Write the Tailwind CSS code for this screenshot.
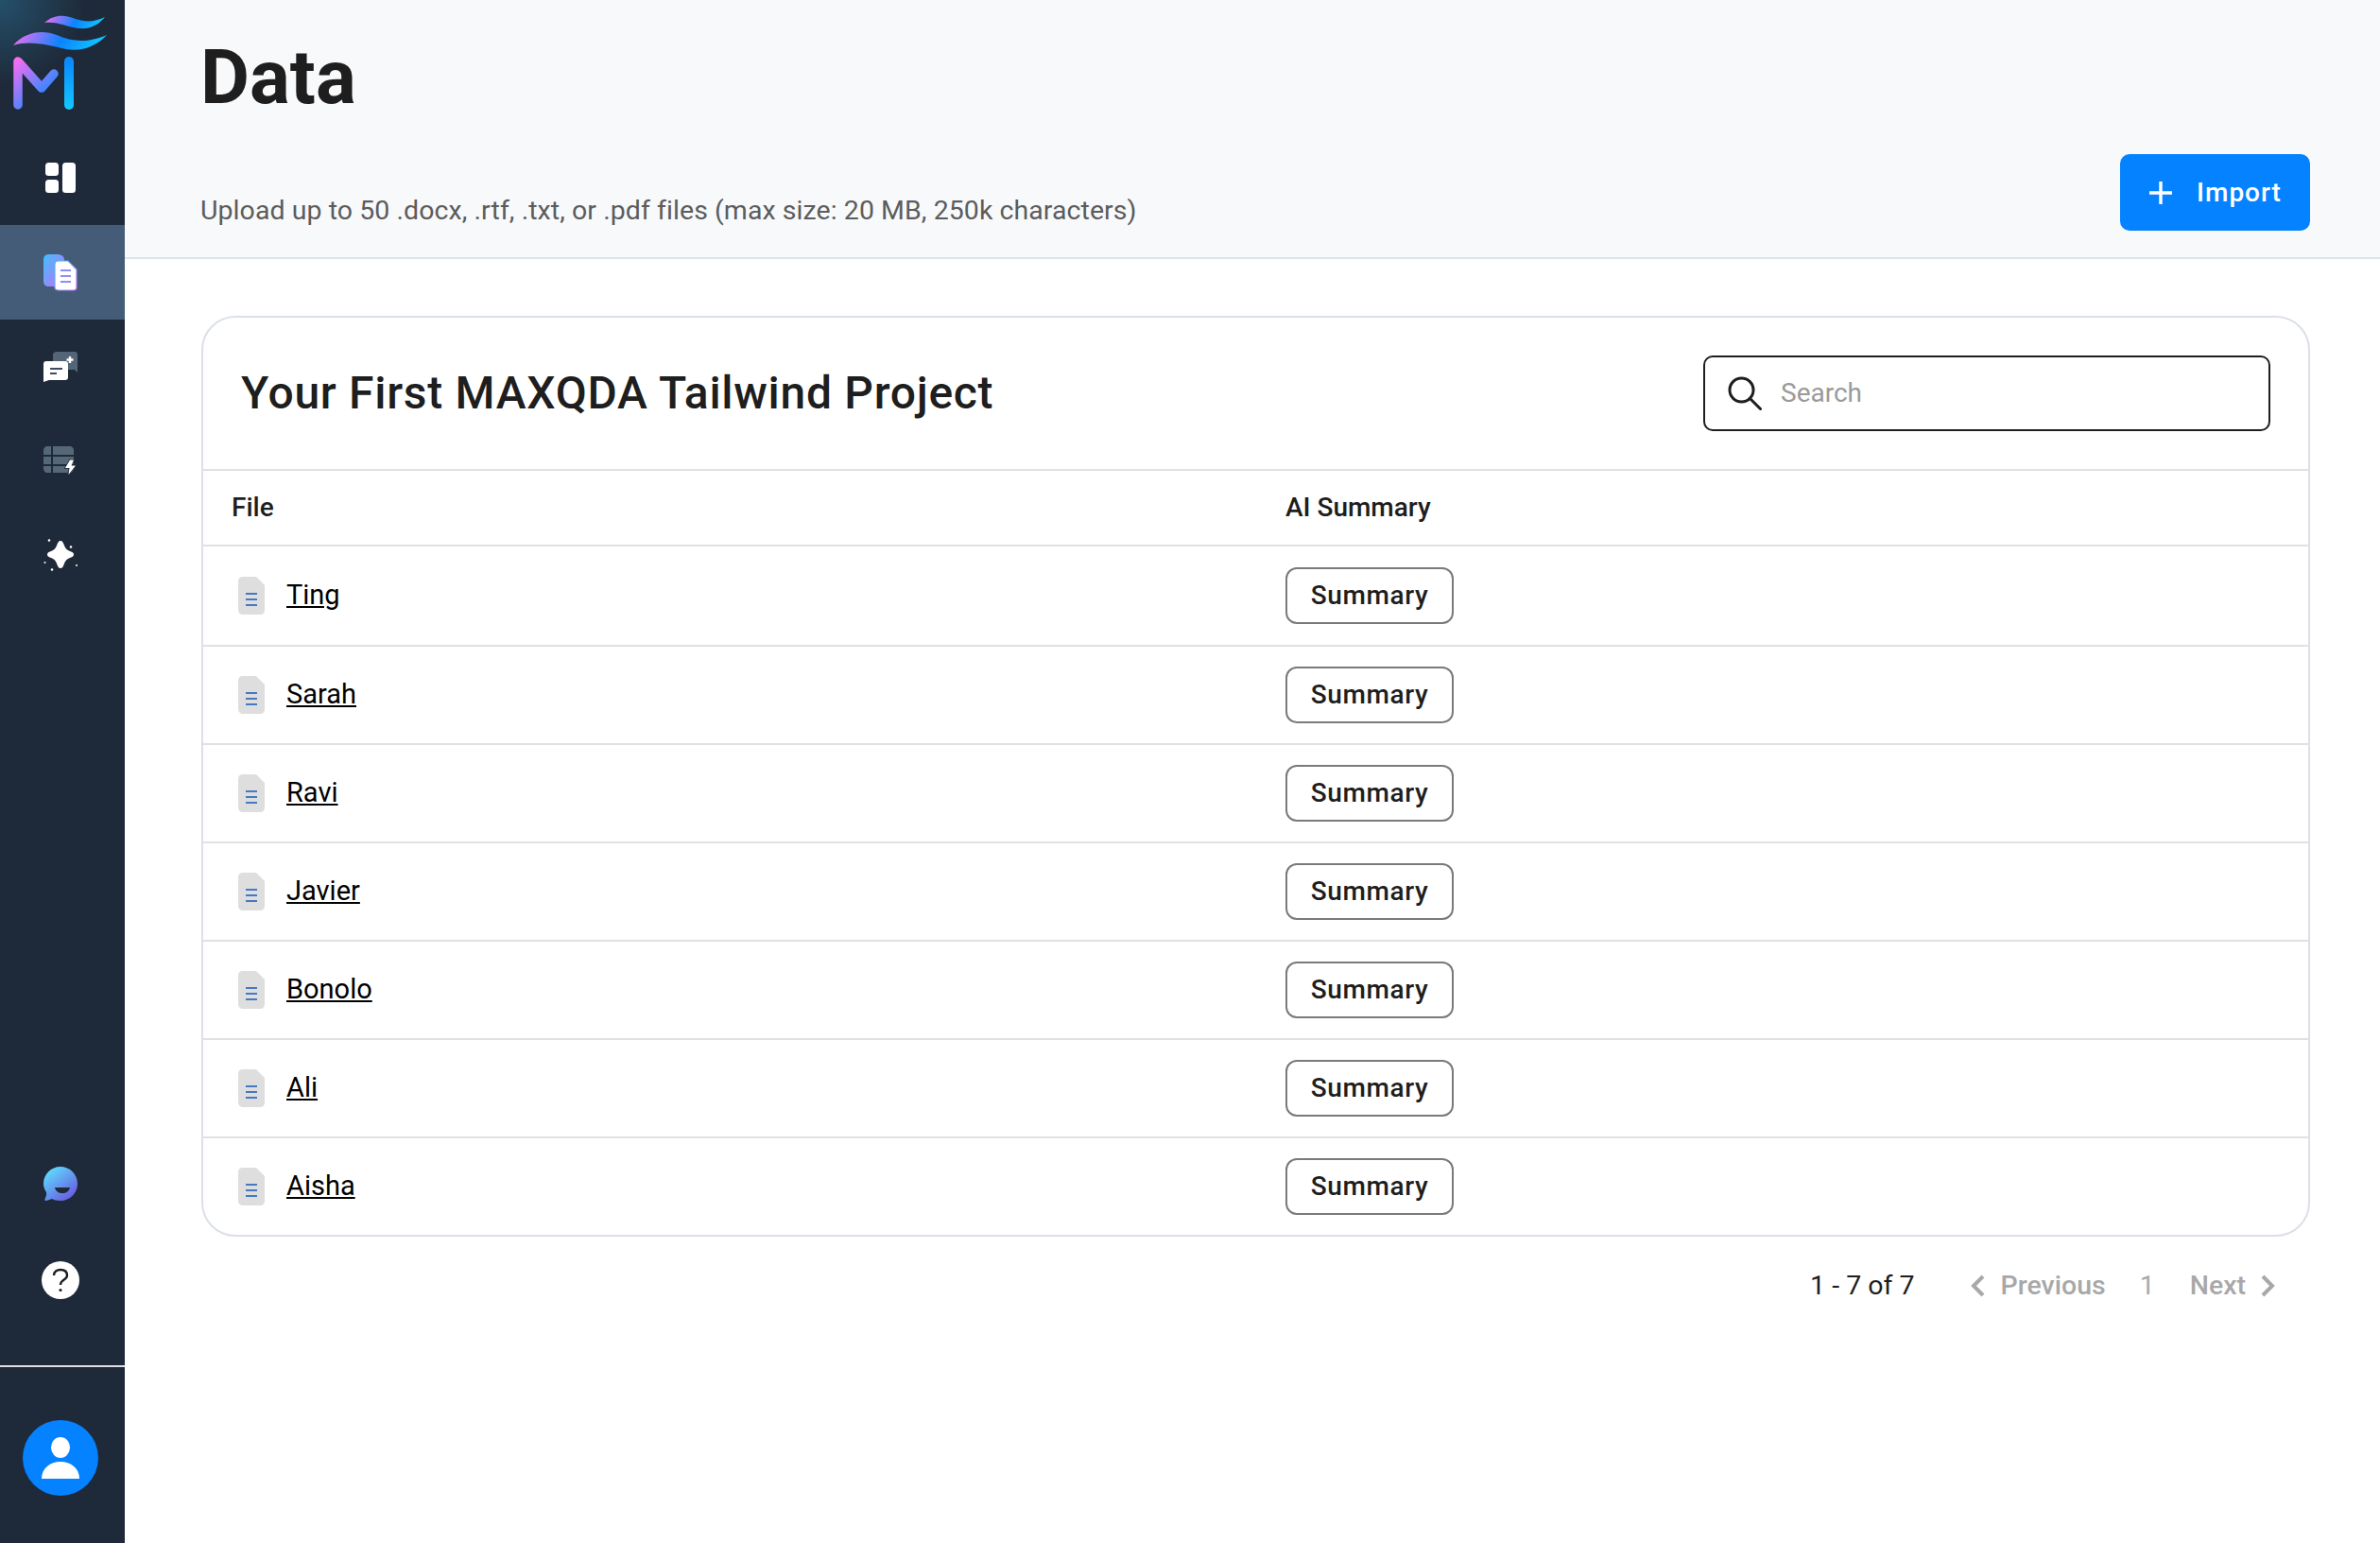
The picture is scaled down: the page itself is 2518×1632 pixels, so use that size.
<!DOCTYPE html>
<html lang="en">
<head>
  <meta charset="UTF-8">
  <title>Data</title>
  <script src="https://cdn.jsdelivr.net/npm/@tailwindcss/browser@4"></script>
</head>
<body class="bg-white font-['Roboto',sans-serif] text-[#1e1e1e]">
  <svg width="0" height="0" class="absolute">
    <defs>
      <linearGradient id="logoA" x1="0" y1="0" x2="1" y2="0.1"><stop offset="0" stop-color="#ff6cf0"/><stop offset="0.55" stop-color="#0a84ff"/><stop offset="1" stop-color="#12c8ff"/></linearGradient>
      <linearGradient id="logoB" gradientUnits="userSpaceOnUse" x1="14" y1="65" x2="60" y2="110"><stop offset="0" stop-color="#ff6cf0"/><stop offset="0.7" stop-color="#3f86ff"/><stop offset="1" stop-color="#0a84ff"/></linearGradient>
      <linearGradient id="logoC" x1="0" y1="0" x2="0" y2="1"><stop offset="0" stop-color="#0a84ff"/><stop offset="1" stop-color="#12c8ff"/></linearGradient>
      <linearGradient id="docs" x1="0" y1="0" x2="1" y2="1"><stop offset="0" stop-color="#3fc0ff"/><stop offset="1" stop-color="#c56cf5"/></linearGradient>
      <linearGradient id="bubble" x1="0.1" y1="0" x2="0.9" y2="1"><stop offset="0" stop-color="#5ce6ff"/><stop offset="1" stop-color="#6a4fe0"/></linearGradient>
    </defs>
  </svg>

  <div class="flex h-[1632px] w-[2518px] overflow-hidden">
    <!-- sidebar -->
    <aside class="flex w-[132px] shrink-0 flex-col bg-[#1e2a3a] bg-[radial-gradient(circle_at_0_0,#25506a_0,#1e2a3a_90px)]">
      <svg class="mt-[15px] ml-[14px] h-[102px] w-[100px]" viewBox="14 15 100 102" fill="none">
        <path d="M47 24C58 14 70 16 80 20C92 24 100 23 111 18C104 27 94 31 84 30C72 29 60 22 47 24Z" fill="url(#logoA)"/>
        <path d="M14 48C26 34 44 31 60 37C76 44 92 46 113 37C102 49 86 55 70 52C52 48 32 42 14 48Z" fill="url(#logoA)"/>
        <path d="M19 111V65L44 93L57 78" stroke="url(#logoB)" stroke-width="9.5" stroke-linecap="round" stroke-linejoin="round"/>
        <rect x="68" y="60" width="10" height="56" rx="5" fill="url(#logoC)"/>
      </svg>

      <nav class="mt-[21px] flex flex-col">
        <a class="flex h-[100px] items-center justify-center pr-[4px]">
          <svg class="h-[32px] w-[32px]" viewBox="0 0 32 32" fill="#fff">
            <rect x="0" y="0" width="14" height="14" rx="3.5"/><rect x="0" y="18" width="14" height="14" rx="3.5"/><rect x="18" y="0" width="14" height="32" rx="3.5"/>
          </svg>
        </a>
        <a class="flex h-[100px] items-center justify-center bg-[#445c78] pr-[4px]">
          <svg class="h-[40px] w-[38px]" viewBox="0 0 38 40" fill="none">
            <path d="M7 1H15C20 1 23 3 23 7V35H7C3 35 1 33 1 29V7C1 3 3 1 7 1Z" fill="url(#docs)"/>
            <path d="M17 8H27L36 17V36C36 38 35 39 33 39H17C14 39 13 38 13 36V12C13 9 14 8 17 8Z" fill="#fff" stroke="url(#docs)" stroke-width="1.2"/>
            <path d="M19 18H30M19 24H30M19 30H30" stroke="#8f8cf8" stroke-width="2.2"/>
          </svg>
        </a>
        <a class="flex h-[100px] items-center justify-center pr-[4px]">
          <svg class="h-[33px] w-[36px]" viewBox="0 0 36 33" fill="none">
            <path d="M14 0H33C35 0 36 1 36 3V22L33 19H14C12 19 10 18 10 16V3C10 1 12 0 14 0Z" fill="#536577"/>
            <path d="M28 5V12M24.500 8.500H31.500" stroke="#fff" stroke-width="2.400"/>
            <path d="M3 10H23C25 10 26 11 26 13V27C26 29 25 30 23 30H6L0 32V13C0 11 1 10 3 10Z" fill="#fff"/>
            <path d="M7 18H20M7 23H14" stroke="#3f4e5f" stroke-width="2"/>
          </svg>
        </a>
        <a class="flex h-[100px] items-center justify-center pr-[4px]">
          <svg class="h-[32px] w-[36px]" viewBox="0 0 36 32" fill="none">
            <path d="M4 0H8V9H0V4C0 2 2 0 4 0ZM10 0H28C30 0 32 2 32 4V9H10ZM0 11H8V19H0ZM10 11H32V19H10ZM0 21H8V28H4C2 28 0 26 0 24ZM10 21H32V24C32 26 30 28 28 28H10Z" fill="#566878"/>
            <path d="M28 14.500L23 23H27.500L26.500 30L34 20.500H29.500L32 14.500Z" fill="#fff" stroke="#1e2a3a" stroke-width="1.500" paint-order="stroke"/>
          </svg>
        </a>
        <a class="flex h-[100px] items-center justify-center pr-[4px]">
          <svg class="h-[36px] w-[36px]" viewBox="0 0 36 36" fill="#fff">
            <path d="M18 2C20 2 21 4 22 7C23 10 25 12 28 13C31 14 32 15 32 16.500C32 18 31 19 28 20C25 21 23 23 22 26C21 29 20 31 18 31C16 31 15 29 14 26C13 23 11 21 8 20C5 19 4 18 4 16.500C4 15 5 14 8 13C11 12 13 10 14 7C15 4 16 2 18 2Z"/>
            <circle cx="6" cy="1.500" r="1.300"/><circle cx="29" cy="8.500" r="1.300"/><circle cx="1.500" cy="25" r="1"/><circle cx="35" cy="28" r="1"/><circle cx="9" cy="32.500" r="1.300"/>
          </svg>
        </a>
      </nav>

      <div class="mt-auto flex flex-col items-center">
        <svg class="mr-[4px] mb-[64px] h-[36px] w-[36px]" viewBox="0 0 36 36">
          <path d="M18 0C28 0 36 8 36 18C36 28 28 36 18 36C14 36 11 35 9 34L3 36C1 36 1 35 2 33C3 31 3.500 29 3 27C1 24 0 21 0 18C0 8 8 0 18 0Z" fill="url(#bubble)"/>
          <path d="M12 22H28C27 26 24 28 20 28C16 28 13 26 12 22Z" fill="#1e2a3a"/>
        </svg>
        <div class="mr-[4px] flex h-[40px] w-[40px] items-center justify-center rounded-full bg-white">
          <svg class="h-[26px] w-[18px]" viewBox="0 0 18 26" fill="none">
            <path d="M2 8C2 4 5 2 9 2C13 2 16 4 16 8C16 13 9 12 9 18" stroke="#1e1e1e" stroke-width="2.400"/>
            <circle cx="9" cy="23.500" r="1.600" fill="#1e1e1e"/>
          </svg>
        </div>
        <div class="mt-[70px] h-[2px] w-full bg-[#dde1e6]"></div>
        <div class="mt-[56px] mr-[4px] mb-[50px] flex h-[80px] w-[80px] items-center justify-center rounded-full bg-[#0582ff]">
          <svg class="h-[44px] w-[40px]" viewBox="0 0 40 44" fill="#fff">
            <ellipse cx="20" cy="11" rx="10" ry="11"/>
            <path d="M0 44C0 33 9 26 20 26C31 26 40 33 40 44Z"/>
          </svg>
        </div>
      </div>
    </aside>

    <!-- main -->
    <main class="flex min-w-0 flex-1 flex-col">
      <header class="flex h-[274px] shrink-0 items-end justify-between border-b-2 border-[#dfe3ea] bg-[#f8f9fb] pr-[74px] pl-[80px]">
        <div class="flex h-full flex-col">
          <h1 class="mt-[37px] text-[80px] leading-[90px] font-bold">Data</h1>
          <p class="mt-auto mb-[29px] text-[28.500px] leading-[40px] tracking-[0.06px] text-[#5c5c5c]">Upload up to 50 .docx, .rtf, .txt, or .pdf files (max size: 20 MB, 250k characters)</p>
        </div>
        <button class="mb-[28px] flex h-[81px] w-[201px] items-center justify-center gap-[25px] rounded-[10px] bg-[#0582ff] text-[28px] font-medium tracking-[1px] text-white">
          <svg class="h-[26px] w-[26px]" viewBox="0 0 26 26" stroke="#fff" stroke-width="3.400"><path d="M13 1V25M1 13H25"/></svg>
          Import
        </button>
      </header>

      <section class="mx-[81px] mt-[60px] w-[2231px] rounded-[36px] border-2 border-[#dbe0e8]">
        <div class="flex h-[162px] items-center justify-between border-b-2 border-[#e1e1e1] pr-[40px] pl-[40px]">
          <h2 class="text-[48px] font-medium tracking-[0.7px] text-[#1e1e1e]">Your First MAXQDA Tailwind Project</h2>
          <label class="flex h-[80px] w-[600px] items-center gap-[20px] rounded-[10px] border-2 border-[#1e1e1e] px-[24px]">
            <svg class="h-[36px] w-[36px] shrink-0" viewBox="0 0 36 36" fill="none" stroke="#1e1e1e" stroke-width="3"><circle cx="14.500" cy="14.500" r="12.500"/><path d="M23.500 23.500L34.500 34.500" stroke-linecap="round"/></svg>
            <span class="text-[28px] text-[#9a9a9a]">Search</span>
          </label>
        </div>

        <div class="grid h-[80px] grid-cols-[1115px_1fr] items-center border-b-2 border-[#e1e1e1] pl-[30px] text-[28px] font-medium">
          <div>File</div>
          <div>AI Summary</div>
        </div>

        <div class="grid h-[106px] grid-cols-[1115px_1fr] items-center border-b-2 border-[#e1e1e1] pl-[37px]">
          <div class="flex items-center gap-[23px]"><svg class="h-[40px] w-[28px]" viewBox="0 0 28 40"><path d="M5 0H19L28 9V35C28 38 26 40 23 40H5C2 40 0 38 0 35V5C0 2 2 0 5 0Z" fill="#dedede"/><path d="M8 18H20M8 24H20M8 30H20" stroke="#4778c2" stroke-width="2"/></svg><a class="text-[29px] text-black underline">Ting</a></div>
          <div class="-ml-[7px]"><button class="h-[60px] w-[178px] rounded-[12px] border-2 border-[#7a7a7a] text-[28px] font-medium tracking-[0.6px]">Summary</button></div>
        </div>
        <div class="grid h-[104px] grid-cols-[1115px_1fr] items-center border-b-2 border-[#e1e1e1] pl-[37px]">
          <div class="flex items-center gap-[23px]"><svg class="h-[40px] w-[28px]" viewBox="0 0 28 40"><path d="M5 0H19L28 9V35C28 38 26 40 23 40H5C2 40 0 38 0 35V5C0 2 2 0 5 0Z" fill="#dedede"/><path d="M8 18H20M8 24H20M8 30H20" stroke="#4778c2" stroke-width="2"/></svg><a class="text-[29px] text-black underline">Sarah</a></div>
          <div class="-ml-[7px]"><button class="h-[60px] w-[178px] rounded-[12px] border-2 border-[#7a7a7a] text-[28px] font-medium tracking-[0.6px]">Summary</button></div>
        </div>
        <div class="grid h-[104px] grid-cols-[1115px_1fr] items-center border-b-2 border-[#e1e1e1] pl-[37px]">
          <div class="flex items-center gap-[23px]"><svg class="h-[40px] w-[28px]" viewBox="0 0 28 40"><path d="M5 0H19L28 9V35C28 38 26 40 23 40H5C2 40 0 38 0 35V5C0 2 2 0 5 0Z" fill="#dedede"/><path d="M8 18H20M8 24H20M8 30H20" stroke="#4778c2" stroke-width="2"/></svg><a class="text-[29px] text-black underline">Ravi</a></div>
          <div class="-ml-[7px]"><button class="h-[60px] w-[178px] rounded-[12px] border-2 border-[#7a7a7a] text-[28px] font-medium tracking-[0.6px]">Summary</button></div>
        </div>
        <div class="grid h-[104px] grid-cols-[1115px_1fr] items-center border-b-2 border-[#e1e1e1] pl-[37px]">
          <div class="flex items-center gap-[23px]"><svg class="h-[40px] w-[28px]" viewBox="0 0 28 40"><path d="M5 0H19L28 9V35C28 38 26 40 23 40H5C2 40 0 38 0 35V5C0 2 2 0 5 0Z" fill="#dedede"/><path d="M8 18H20M8 24H20M8 30H20" stroke="#4778c2" stroke-width="2"/></svg><a class="text-[29px] text-black underline">Javier</a></div>
          <div class="-ml-[7px]"><button class="h-[60px] w-[178px] rounded-[12px] border-2 border-[#7a7a7a] text-[28px] font-medium tracking-[0.6px]">Summary</button></div>
        </div>
        <div class="grid h-[104px] grid-cols-[1115px_1fr] items-center border-b-2 border-[#e1e1e1] pl-[37px]">
          <div class="flex items-center gap-[23px]"><svg class="h-[40px] w-[28px]" viewBox="0 0 28 40"><path d="M5 0H19L28 9V35C28 38 26 40 23 40H5C2 40 0 38 0 35V5C0 2 2 0 5 0Z" fill="#dedede"/><path d="M8 18H20M8 24H20M8 30H20" stroke="#4778c2" stroke-width="2"/></svg><a class="text-[29px] text-black underline">Bonolo</a></div>
          <div class="-ml-[7px]"><button class="h-[60px] w-[178px] rounded-[12px] border-2 border-[#7a7a7a] text-[28px] font-medium tracking-[0.6px]">Summary</button></div>
        </div>
        <div class="grid h-[104px] grid-cols-[1115px_1fr] items-center border-b-2 border-[#e1e1e1] pl-[37px]">
          <div class="flex items-center gap-[23px]"><svg class="h-[40px] w-[28px]" viewBox="0 0 28 40"><path d="M5 0H19L28 9V35C28 38 26 40 23 40H5C2 40 0 38 0 35V5C0 2 2 0 5 0Z" fill="#dedede"/><path d="M8 18H20M8 24H20M8 30H20" stroke="#4778c2" stroke-width="2"/></svg><a class="text-[29px] text-black underline">Ali</a></div>
          <div class="-ml-[7px]"><button class="h-[60px] w-[178px] rounded-[12px] border-2 border-[#7a7a7a] text-[28px] font-medium tracking-[0.6px]">Summary</button></div>
        </div>
        <div class="grid h-[102px] grid-cols-[1115px_1fr] items-center pl-[37px]">
          <div class="flex items-center gap-[23px]"><svg class="h-[40px] w-[28px]" viewBox="0 0 28 40"><path d="M5 0H19L28 9V35C28 38 26 40 23 40H5C2 40 0 38 0 35V5C0 2 2 0 5 0Z" fill="#dedede"/><path d="M8 18H20M8 24H20M8 30H20" stroke="#4778c2" stroke-width="2"/></svg><a class="text-[29px] text-black underline">Aisha</a></div>
          <div class="-ml-[7px]"><button class="h-[60px] w-[178px] rounded-[12px] border-2 border-[#7a7a7a] text-[28px] font-medium tracking-[0.6px]">Summary</button></div>
        </div>
      </section>

      <footer class="mt-[32px] mr-[110px] flex items-center justify-end text-[28.500px] leading-[40px]">
        <span class="mr-[59px]">1 - 7 of 7</span>
        <svg class="mr-[16px] h-[24px] w-[16px]" viewBox="0 0 16 24" fill="none" stroke="#a8a8a8" stroke-width="4"><path d="M14 2L4 12L14 22"/></svg>
        <span class="font-medium text-[#a8a8a8]">Previous</span>
        <span class="mr-[37px] ml-[36px] text-[#a8a8a8]">1</span>
        <span class="font-medium text-[#a8a8a8]">Next</span>
        <svg class="ml-[16px] h-[24px] w-[16px]" viewBox="0 0 16 24" fill="none" stroke="#a8a8a8" stroke-width="4"><path d="M2 2L12 12L2 22"/></svg>
      </footer>
    </main>
  </div>
</body>
</html>
